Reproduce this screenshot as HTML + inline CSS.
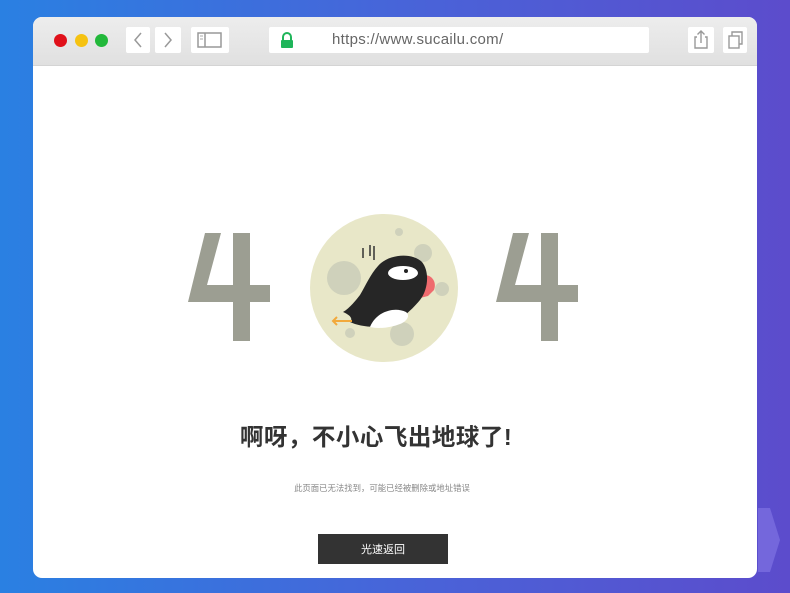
<!DOCTYPE html>
<html><head><meta charset="utf-8"><style>
*{margin:0;padding:0;box-sizing:border-box}
body{width:790px;height:593px;overflow:hidden;background:linear-gradient(90deg,#2a80e2 0%,#4a62d8 55%,#5c4ccc 100%);position:relative;font-family:"Liberation Sans","Noto Sans CJK SC",sans-serif}
.win{position:absolute;left:33px;top:17px;width:724px;height:561px;background:#fff;border-radius:9px;overflow:hidden}
.bar{position:absolute;left:0;top:0;width:724px;height:49px;background:linear-gradient(#ededed,#e0e0e0);border-bottom:1px solid #d4d4d4}
.dot{position:absolute;top:17px;width:13px;height:13px;border-radius:50%}
.btn{position:absolute;top:10px;height:26px;background:#fff;border-radius:2px}
.url{position:absolute;left:236px;top:10px;width:380px;height:26px;background:#fff;border-radius:2px;font-size:15px;color:#666;letter-spacing:0.3px}
h1{position:absolute;left:0;width:686px;top:401px;text-align:center;font-size:23.5px;font-weight:bold;color:#333;letter-spacing:0.5px;white-space:nowrap}
.sub{position:absolute;left:0;width:698px;top:465px;text-align:center;font-size:8.4px;color:#888;white-space:nowrap}
.go{position:absolute;left:285px;top:517px;width:130px;height:30px;background:#333;color:#fff;font-size:11px;text-align:center;line-height:32px}
</style></head><body>
<svg style="position:absolute;left:0;top:0" width="790" height="593"><polygon points="758,508 770,508 780,540 770,572 758,572" fill="#7a6ee0" opacity="0.8"/></svg>
<div class="win">
<div class="bar">
<div class="dot" style="left:21px;background:#e0101a"></div>
<div class="dot" style="left:42px;background:#f5c211"></div>
<div class="dot" style="left:62px;background:#22b83a"></div>
<div class="btn" style="left:93px;width:24px"><svg width="24" height="26"><path d="M15 6 L9 13 L15 20" stroke="#999" stroke-width="1.5" fill="none"/></svg></div>
<div class="btn" style="left:122px;width:26px"><svg width="26" height="26"><path d="M10 6 L16 13 L10 20" stroke="#999" stroke-width="1.5" fill="none"/></svg></div>
<div class="btn" style="left:158px;width:38px"><svg width="38" height="26"><rect x="7" y="6" width="23" height="14" stroke="#999" stroke-width="1.5" fill="none"/><line x1="14" y1="6" x2="14" y2="20" stroke="#999" stroke-width="1.5"/><line x1="9" y1="9" x2="12" y2="9" stroke="#aaa"/><line x1="9" y1="12" x2="12" y2="12" stroke="#aaa"/></svg></div>
<div class="url"><svg style="position:absolute;left:10px;top:5px" width="16" height="17"><path d="M4 8 V5 a4 4 0 0 1 8 0 V8" stroke="#1fb55a" stroke-width="2" fill="none"/><rect x="2" y="8" width="12" height="8" rx="1" fill="#1fb55a"/></svg><span style="position:absolute;left:63px;top:4px">https://www.sucailu.com/</span></div>
<div class="btn" style="left:655px;width:26px"><svg width="26" height="26"><path d="M9 10 H7 V21 H19 V10 H17" stroke="#999" stroke-width="1.4" fill="none"/><path d="M13 16 V4 M9.5 7.5 L13 4 L16.5 7.5" stroke="#999" stroke-width="1.4" fill="none"/></svg></div>
<div class="btn" style="left:690px;width:24px"><svg width="24" height="26"><rect x="6" y="9" width="10" height="12" stroke="#999" stroke-width="1.4" fill="none"/><path d="M9 9 V5 H19 V17 H16" stroke="#999" stroke-width="1.4" fill="none"/></svg></div>
</div>
<svg style="position:absolute;left:-33px;top:-17px" width="790" height="593">
<g fill="#9c9e92">
<polygon points="205,233 221,233 207,285 233,285 233,233 250,233 250,285 270,285 270,302 250,302 250,341 233,341 233,302 188,302"/>
<polygon points="513,233 529,233 515,285 541,285 541,233 558,233 558,285 578,285 578,302 558,302 558,341 541,341 541,302 496,302"/>
</g>
<circle cx="384" cy="288" r="74" fill="#e8e7c8"/>
<g fill="#cfd1bb">
<circle cx="344" cy="278" r="17"/><circle cx="423" cy="253" r="9"/><circle cx="399" cy="232" r="4"/>
<circle cx="442" cy="289" r="7"/><circle cx="402" cy="334" r="12"/><circle cx="350" cy="333" r="5"/>
</g>
<path d="M363 248 V258 M370 245 V256 M374 246 V260" stroke="#333" stroke-width="1.5"/>
<path d="M422 275 C432 274 437 282 434 290 L428 296 L420 298 Z" fill="#ef6b6e"/>
<path d="M378 266 C388 254 412 252 422 262 C430 272 428 290 420 300 C410 312 398 322 385 326 C372 328 358 326 350 322 C354 318 348 314 343 312 C350 308 356 300 360 295 C366 285 370 275 378 266 Z" fill="#262626"/>
<path d="M370 327 C376 312 394 306 406 312 C411 316 406 322 400 324 C390 328 378 329 370 327 Z" fill="#fff"/>
<ellipse cx="403" cy="273" rx="15" ry="7" fill="#fff"/>
<circle cx="406" cy="271" r="2" fill="#222"/>
<path d="M333 321 H352 M337 317 L333 321 L337 325" stroke="#f2a93b" stroke-width="2" fill="none"/>
</svg>
<h1>啊呀，不小心飞出地球了!</h1>
<div class="sub">此页面已无法找到，可能已经被删除或地址错误</div>
<div class="go">光速返回</div>
</div>
</body></html>
